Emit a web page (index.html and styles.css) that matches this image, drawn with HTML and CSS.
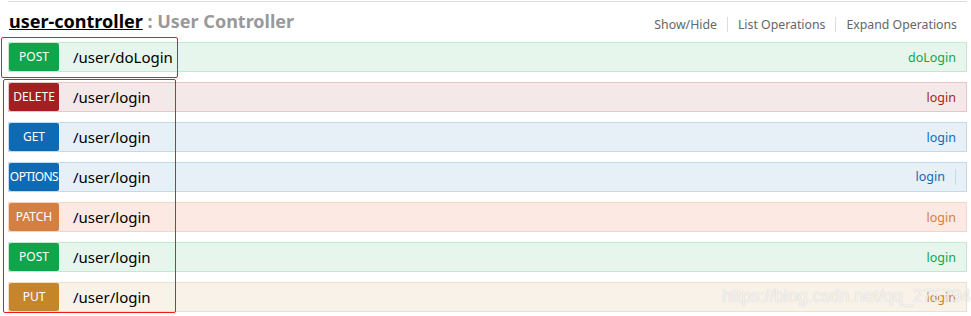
FILE: index.html
```html
<!DOCTYPE html>
<html>
<head>
    <meta charset="UTF-8">
    <link rel="stylesheet" href="styles.css">
</head>
<body>
    <div class="resource">
        <div class="heading">
            <h2><a class="name">user-controller</a> <span class="desc">: User Controller</span></h2>
            <ul class="links">
                <li>Show/Hide</li>
                <li>List Operations</li>
                <li class="last">Expand Operations</li>
            </ul>
        </div>

        <ul class="endpoints">
            <li class="op post">
                <span class="method">POST</span>
                <span class="path">/user/doLogin</span>
                <span class="summary">doLogin</span>
            </li>
            <li class="op delete">
                <span class="method">DELETE</span>
                <span class="path">/user/login</span>
                <span class="summary">login</span>
            </li>
            <li class="op get">
                <span class="method">GET</span>
                <span class="path">/user/login</span>
                <span class="summary">login</span>
            </li>
            <li class="op opts">
                <span class="method">OPTIONS</span>
                <span class="path">/user/login</span>
                <span class="summary sep">login</span>
            </li>
            <li class="op patch">
                <span class="method">PATCH</span>
                <span class="path">/user/login</span>
                <span class="summary">login</span>
            </li>
            <li class="op post">
                <span class="method">POST</span>
                <span class="path">/user/login</span>
                <span class="summary">login</span>
            </li>
            <li class="op put">
                <span class="method">PUT</span>
                <span class="path">/user/login</span>
                <span class="summary">login</span>
            </li>
        </ul>
    </div>

    <!-- annotations -->
    <div class="mark mark-one"></div>
    <div class="mark mark-two"></div>
    <div class="watermark">https://blog.csdn.net/qq_27579471</div>
</body>
</html>
```

FILE: styles.css
```css
body {
    margin: 0;
    font-family: "Noto Sans", "Open Sans", sans-serif;
    background: #fff;
    position: relative;
    width: 971px;
    height: 316px;
    overflow: hidden;
}

.resource {
    margin: 1px 4px 0 8px;
    border-top: 1px solid #ddd;
}

.heading {
    display: flex;
    justify-content: space-between;
    align-items: flex-end;
    height: 40px;
}

.heading h2 {
    margin: 0 0 9px 1px;
    font-size: 18px;
    font-weight: bold;
    line-height: 24px;
    color: #999;
}

.heading .name {
    color: #000;
    text-decoration: underline;
}

.heading .desc {
    color: #999;
}

.links {
    list-style: none;
    margin: 0 10px 10px 0;
    padding: 0;
    display: flex;
    font-size: 12.3px;
    line-height: 15px;
    color: #666;
}

.links li {
    padding: 0 10px;
    border-right: 1px solid #ddd;
}

.links li.last {
    border-right: none;
    padding-right: 0;
}

.endpoints {
    list-style: none;
    margin: 0;
    padding: 0;
    display: flex;
    flex-direction: column;
    gap: 10px;
}

.op {
    display: flex;
    align-items: center;
    height: 28px;
    border: 1px solid;
}

.method {
    width: 50px;
    height: 28px;
    line-height: 28px;
    border-radius: 2px;
    color: #fff;
    font-size: 12px;
    text-align: center;
    flex-shrink: 0;
    overflow: hidden;
    white-space: nowrap;
}

.path {
    margin-left: 14px;
    font-size: 15px;
    color: #000;
}

.summary {
    margin-left: auto;
    margin-right: 10px;
    font-size: 12.5px;
}

.summary.sep {
    padding-right: 10px;
    border-right: 1px solid #c3d9ec;
    line-height: 16px;
}

.post { background: #e7f6ec; border-color: #c3e8d1; }
.post .method { background: #10a54a; }
.post .summary { color: #10a54a; }

.delete { background: #f5e8e8; border-color: #e8c6c7; }
.delete .method { background: #a41e22; }
.delete .summary { color: #a41e22; }

.get { background: #e7f0f7; border-color: #c3d9ec; }
.get .method { background: #0f6ab4; }
.get .summary { color: #0f6ab4; }

.opts { background: #e7f0f7; border-color: #c3d9ec; }
.opts .method { background: #0f6ab4; letter-spacing: -0.6px; }
.opts .summary { color: #0f6ab4; }

.patch { background: #fce9e3; border-color: #f5d5c3; }
.patch .method { background: #d38042; }
.patch .summary { color: #d38042; }

.put { background: #f9f2e9; border-color: #f0e0ca; }
.put .method { background: #c5862b; }
.put .summary { color: #c5862b; }

.mark {
    position: absolute;
    border: 1px solid #f01818;
    border-radius: 2px;
}

.mark-one {
    left: 1px;
    top: 37px;
    width: 175px;
    height: 39px;
}

.mark-two {
    left: 3px;
    top: 79px;
    width: 171px;
    height: 232px;
}

.watermark {
    position: absolute;
    left: 722px;
    top: 286px;
    font-family: "Liberation Sans", Arial, sans-serif;
    font-size: 17.5px;
    color: rgba(255, 255, 255, 0.8);
    text-shadow: 0 0 1px rgba(110, 110, 110, 0.4);
}
```
